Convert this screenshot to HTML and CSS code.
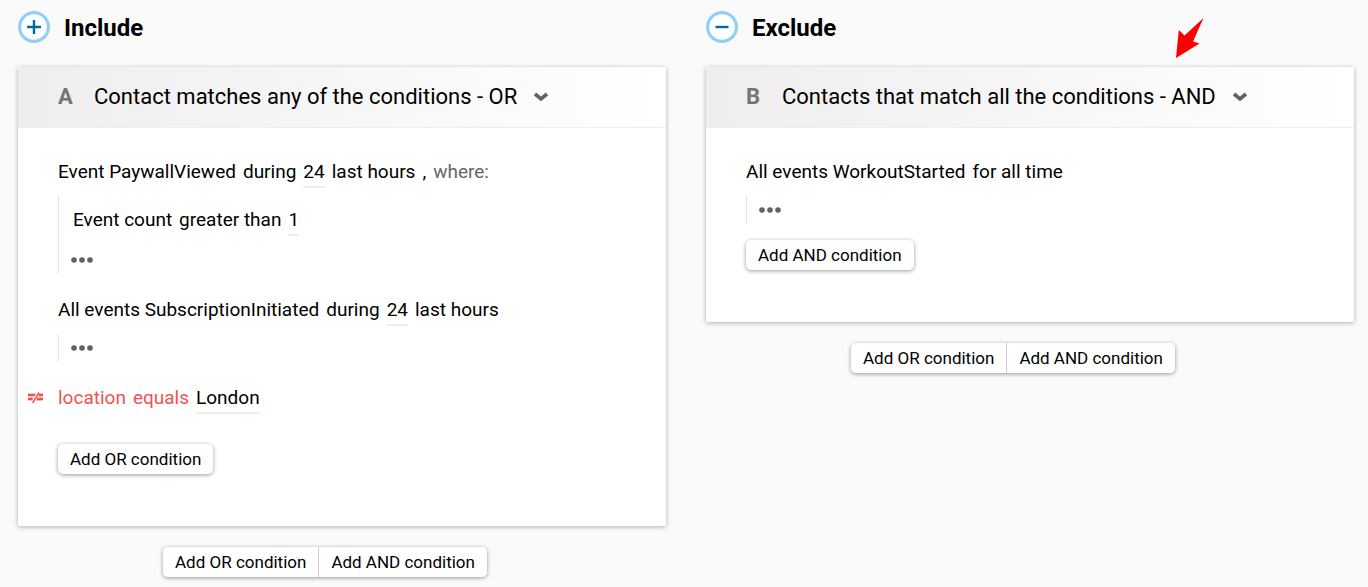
FILE: index.html
```html
<!DOCTYPE html>
<html lang="en">
<head>
  <meta charset="UTF-8">
  <meta name="viewport" content="width=device-width, initial-scale=1">
  <title>Segment conditions</title>
  <link rel="stylesheet" href="styles.css">
</head>
<body>
  <main class="segment">
    <!-- Include -->
    <section class="column">
      <div class="column-header">
        <svg class="column-icon" viewBox="0 0 32 32" aria-hidden="true">
          <circle cx="16" cy="16" r="14.4"/>
          <path d="M9 16h14M16 9v14"/>
        </svg>
        <h2 class="column-title">Include</h2>
      </div>
      <div class="card">
        <div class="card-header">
          <label class="group-letter" for="group-a">A</label>
          <select id="group-a" class="group-select">
            <option selected>Contact matches any of the conditions - OR</option>
            <option>Contacts that match all the conditions - AND</option>
          </select>
          <svg class="chevron" viewBox="0 0 16 10" aria-hidden="true"><path d="M2 2l6 5 6-5"/></svg>
        </div>
        <div class="card-body">
          <div class="condition">
            <div class="row">
              <span>Event PaywallViewed</span>
              <label for="viewed-hours">during</label>
              <input type="text" id="viewed-hours" class="value" value="24">
              <span>last hours</span>
              <span>,</span>
              <span class="muted">where:</span>
            </div>
            <div class="nested">
              <div class="row nested-row">
                <span>Event count</span>
                <label for="event-count">greater than</label>
                <input type="text" id="event-count" class="value" value="1">
              </div>
              <button type="button" class="more-btn" aria-label="More">
                <svg viewBox="0 0 22 6"><circle cx="3" cy="3" r="2.8"/><circle cx="11" cy="3" r="2.8"/><circle cx="19" cy="3" r="2.8"/></svg>
              </button>
            </div>
          </div>
          <div class="condition">
            <div class="row">
              <span>All events SubscriptionInitiated</span>
              <label for="initiated-hours">during</label>
              <input type="text" id="initiated-hours" class="value" value="24">
              <span>last hours</span>
            </div>
            <div class="nested">
              <button type="button" class="more-btn" aria-label="More">
                <svg viewBox="0 0 22 6"><circle cx="3" cy="3" r="2.8"/><circle cx="11" cy="3" r="2.8"/><circle cx="19" cy="3" r="2.8"/></svg>
              </button>
            </div>
          </div>
          <div class="condition">
            <div class="row negated">
              <svg class="not-icon" viewBox="0 0 16 12" aria-hidden="true">
                <path class="shade" d="M0 1h8L4 9H0zM11.500 1H15v8H7.500z"/>
                <path d="M0 3h7M0 7h4.500M11 3h4M9 7h6"/>
                <path class="slash" d="M4.500 11L11 0.500"/>
              </svg>
              <span>location</span>
              <label for="location">equals</label>
              <input type="text" id="location" class="value" value="London">
            </div>
          </div>
          <button type="button" class="btn group-action">Add OR condition</button>
        </div>
      </div>
      <div class="column-footer">
        <div class="btn-group">
          <button type="button" class="btn">Add OR condition</button>
          <button type="button" class="btn">Add AND condition</button>
        </div>
      </div>
    </section>

    <!-- Exclude -->
    <section class="column">
      <div class="column-header">
        <svg class="column-icon" viewBox="0 0 32 32" aria-hidden="true">
          <circle cx="16" cy="16" r="14.4"/>
          <path d="M9.500 16h13"/>
        </svg>
        <h2 class="column-title">Exclude</h2>
        <svg class="pointer" viewBox="0 0 28 40" aria-hidden="true"><path d="M27.500 0L17 23.500l6.500 2L0 40 2.800 12l5.700 5.500z"/></svg>
      </div>
      <div class="card">
        <div class="card-header">
          <label class="group-letter" for="group-b">B</label>
          <select id="group-b" class="group-select">
            <option>Contact matches any of the conditions - OR</option>
            <option selected>Contacts that match all the conditions - AND</option>
          </select>
          <svg class="chevron" viewBox="0 0 16 10" aria-hidden="true"><path d="M2 2l6 5 6-5"/></svg>
        </div>
        <div class="card-body">
          <div class="condition">
            <div class="row">
              <span>All events WorkoutStarted</span>
              <span>for all time</span>
            </div>
            <div class="nested">
              <button type="button" class="more-btn" aria-label="More">
                <svg viewBox="0 0 22 6"><circle cx="3" cy="3" r="2.8"/><circle cx="11" cy="3" r="2.8"/><circle cx="19" cy="3" r="2.8"/></svg>
              </button>
            </div>
            <button type="button" class="btn condition-action">Add AND condition</button>
          </div>
        </div>
      </div>
      <div class="column-footer">
        <div class="btn-group">
          <button type="button" class="btn">Add OR condition</button>
          <button type="button" class="btn">Add AND condition</button>
        </div>
      </div>
    </section>
  </main>
</body>
</html>
```
FILE: styles.css
```css
:root {
  --text: #000000;
  --muted: #666666;
  --danger: #ef5350;
  --line: #e4e4e4;
  --icon-ring: #90cff7;
  --icon-mark: #0069a5;
}
* {
  box-sizing: border-box;
}
body {
  margin: 0;
  background: #fafafa;
  color: var(--text);
  font-family: Roboto, "Liberation Sans", sans-serif;
  font-size: 19px;
  line-height: 24px;
}
button,
input,
select {
  font: inherit;
  color: inherit;
}
.segment {
  display: flex;
  align-items: flex-start;
  gap: 40px;
  padding: 10px 14px 10px 18px;
}
.column {
  flex: 1;
  min-width: 0;
}
.column-header {
  position: relative;
  display: flex;
  align-items: center;
  gap: 14px;
  height: 34px;
  margin-bottom: 23px;
}
.column-icon {
  width: 32px;
  height: 32px;
}
.column-icon circle {
  fill: white;
  stroke: var(--icon-ring);
  stroke-width: 3.2;
}
.column-icon path {
  stroke: var(--icon-mark);
  stroke-width: 2.4;
}
.column-title {
  margin: 0;
  padding-top: 2px;
  font-size: 24px;
  font-weight: 700;
}
.pointer {
  position: absolute;
  top: 8px;
  right: 150px;
  width: 28px;
  height: 40px;
  fill: #ff0000;
}

/* Cards */
.card {
  background: white;
  border-radius: 2px;
  box-shadow: 0 1px 5px rgba(0, 0, 0, 0.3);
}
.card-header {
  display: flex;
  align-items: center;
  height: 61px;
  padding: 0 40px;
  border-bottom: 1px solid #eeeeee;
  border-radius: 2px 2px 0 0;
  background: linear-gradient(90deg, #eeeeee, #ffffff);
  font-size: 22px;
}
.group-letter {
  width: 36px;
  color: #757575;
  font-weight: 700;
}
.group-select {
  appearance: none;
  field-sizing: content;
  padding: 0;
  border: none;
  background: transparent;
  cursor: pointer;
}
.chevron {
  width: 16px;
  height: 10px;
  margin-left: 16px;
  fill: none;
  stroke: #616161;
  stroke-width: 3.6;
}
.card-body {
  padding: 28px 40px 52px;
}

/* Conditions */
.condition + .condition {
  margin-top: 20px;
}
.row {
  position: relative;
  display: flex;
  align-items: center;
  gap: 7px;
  min-height: 32px;
}
.value {
  field-sizing: content;
  height: 32px;
  padding: 0;
  border: none;
  border-bottom: 2px solid #eeeeee;
  border-radius: 0;
  background: transparent;
}
.muted {
  color: var(--muted);
}
.negated {
  color: var(--danger);
}
.negated .value {
  color: var(--text);
}
.not-icon {
  position: absolute;
  left: -30px;
  width: 16px;
  height: 12px;
  fill: none;
  stroke: var(--danger);
  stroke-width: 2;
}
.not-icon .shade {
  fill: #f9c0bf;
  stroke: none;
}
.not-icon .slash {
  stroke-width: 1.5;
}
.nested {
  margin-top: 8px;
  padding-left: 12px;
  border-left: 1px solid var(--line);
}
.nested-row {
  padding: 8px 0 0 2px;
  margin-bottom: 10px;
}
.more-btn {
  display: flex;
  align-items: center;
  height: 28px;
  padding: 0;
  border: none;
  background: none;
  cursor: pointer;
}
.more-btn svg {
  width: 22px;
  height: 6px;
  fill: #616161;
}

/* Buttons */
.btn {
  height: 30px;
  padding: 0 12px;
  border: none;
  border-radius: 5px;
  background: white;
  box-shadow: 0 1px 4px rgba(0, 0, 0, 0.4);
  font-size: 17px;
  line-height: 30px;
  cursor: pointer;
}
.btn:hover {
  background: #f5f5f5;
}
.group-action {
  margin-top: 30px;
}
.condition-action {
  display: block;
  margin-top: 16px;
}
.column-footer {
  display: flex;
  justify-content: center;
  margin-top: 21px;
  padding-right: 34px;
}
.btn-group {
  display: flex;
  border-radius: 5px;
  box-shadow: 0 1px 4px rgba(0, 0, 0, 0.4);
}
.btn-group .btn {
  box-shadow: none;
}
.btn-group .btn:first-child {
  border-radius: 5px 0 0 5px;
}
.btn-group .btn:last-child {
  border-left: 1px solid #d0d0d0;
  border-radius: 0 5px 5px 0;
}
```
